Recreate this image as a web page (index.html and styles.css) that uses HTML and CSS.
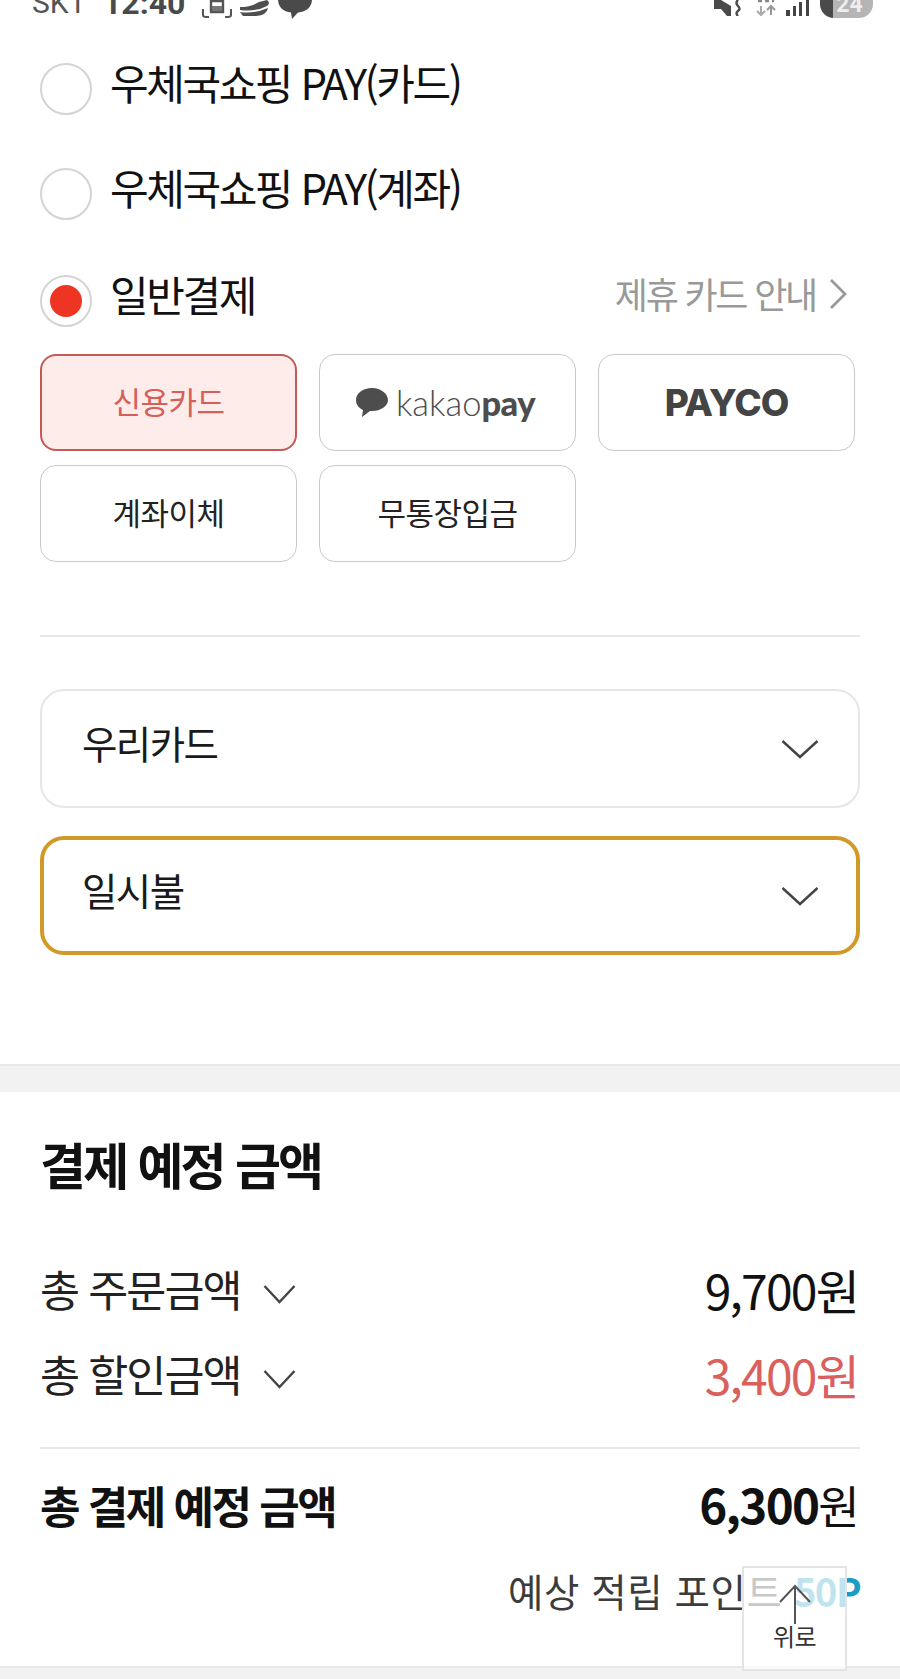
FILE: index.html
```html
<!DOCTYPE html>
<html lang="ko">
<head>
<meta charset="utf-8">
<title>결제</title>
<link rel="stylesheet" href="styles.css">
</head>
<body>
<div class="page">
  <div class="status">
    <div class="status-left">
      <span class="carrier">SKT</span>
      <span class="clock">12:40</span>
      <svg class="si si-rec" viewBox="0 0 30 18"><path d="M1 9v6q0 2 3 2h3M29 9v6q0 2-3 2h-3" fill="none" stroke="#555" stroke-width="2"/><path d="M9 1h12v11H9z" fill="none" stroke="#555" stroke-width="2.4"/><path d="M10 6h10v5H10z" fill="#777"/></svg>
      <svg class="si si-shoe" viewBox="0 0 30 16"><path d="M0 7 Q11 7 19 2 L27 0 Q31 3 27 6 Q16 12 0 10Z" fill="#4f4f4f"/><path d="M0 12 Q14 14 28 8 Q27 15 16 16 H3Z" fill="#4f4f4f"/></svg>
      <svg class="si si-chat" viewBox="0 0 34 19"><path d="M0 0H34Q33 11 20 12.500L14 19 13 12.500Q1 11 0 0Z" fill="#4a4a4a"/></svg>
    </div>
    <div class="status-right">
      <svg class="si si-mute" viewBox="0 0 28 16"><path d="M0 0H7L17 6V16H13L7 9H0Z" fill="#4a4a4a"/><path d="M24 0q-3 3 0 6t0 5 0 5" fill="none" stroke="#4a4a4a" stroke-width="2.400"/></svg>
      <svg class="si si-net" viewBox="0 0 20 16"><path d="M5 6v9M1 11l4 4 4-4" fill="none" stroke="#aaa" stroke-width="2"/><path d="M15 15V6M11 10l4-4 4 4" fill="none" stroke="#999" stroke-width="2"/><path d="M2 1h16" stroke="#888" stroke-width="2.500" stroke-dasharray="4 3"/></svg>
      <svg class="si si-bars" viewBox="0 0 25 16"><path d="M1 10h4v6H1zM8 6h3v10H8zM14 2h3v14h-3zM21 0h3v16h-3z" fill="#444"/></svg>
      <div class="battery"><span class="battery-num">24</span></div>
    </div>
  </div>

  <section class="pay">
    <div class="option option-first">
      <span class="radio"></span>
      <span class="option-label">우체국쇼핑 PAY(카드)</span>
    </div>
    <div class="option">
      <span class="radio"></span>
      <span class="option-label">우체국쇼핑 PAY(계좌)</span>
    </div>
    <div class="option option-split">
      <span class="radio radio-on"></span>
      <span class="option-label">일반결제</span>
      <span class="partner">제휴 카드 안내
        <svg class="partner-chev" viewBox="0 0 18 32"><path d="M2 2l14 14L2 30" fill="none" stroke="#999" stroke-width="2.800"/></svg>
      </span>
    </div>

    <div class="methods">
      <div class="method method-on">신용카드</div>
      <div class="method method-logo">
        <svg class="kakao-bubble" viewBox="0 0 32 29"><path d="M16 0C7 0 0 5 0 12c0 5 3 8 7 10l-1 7 8-6h2c9 0 16-5 16-11S25 0 16 0Z" fill="#4d4d4d"/></svg>
        <span class="kakao-text">kakao<b class="kakao-pay">pay</b></span>
      </div>
      <div class="method method-logo payco">PAYCO</div>
      <div class="method">계좌이체</div>
      <div class="method">무통장입금</div>
    </div>

    <hr class="rule rule-pay">

    <div class="select">
      <span class="select-text">우리카드</span>
      <svg class="select-chev" viewBox="0 0 38 20"><path d="M1.500 2L19 18 36.500 2" fill="none" stroke="#444" stroke-width="2.400"/></svg>
    </div>
    <div class="select select-focus">
      <span class="select-text">일시불</span>
      <svg class="select-chev" viewBox="0 0 38 20"><path d="M1.500 2L19 18 36.500 2" fill="none" stroke="#444" stroke-width="2.400"/></svg>
    </div>
  </section>

  <div class="band"></div>

  <section class="summary">
    <h2 class="summary-title">결제 예정 금액</h2>
    <div class="line line-first">
      <span class="line-label">총 주문금액
        <svg class="line-chev" viewBox="0 0 33 20"><path d="M1.500 2L16.500 18 31.500 2" fill="none" stroke="#444" stroke-width="2.400"/></svg>
      </span>
      <span class="amount">9,700원</span>
    </div>
    <div class="line line-second">
      <span class="line-label">총 할인금액
        <svg class="line-chev" viewBox="0 0 33 20"><path d="M1.500 2L16.500 18 31.500 2" fill="none" stroke="#444" stroke-width="2.400"/></svg>
      </span>
      <span class="amount amount-red">3,400원</span>
    </div>
    <hr class="rule rule-summary">
    <div class="total">
      <span class="total-label">총 결제 예정 금액</span>
      <span class="total-amount"><b class="total-num">6,300</b>원</span>
    </div>
    <div class="points">예상 적립 포인트 <b class="points-num">50P</b></div>
  </section>

  <div class="band-bottom"></div>

  <div class="to-top">
    <svg class="to-top-arrow" viewBox="0 0 32 40"><path d="M16 40V2M1 18L16 2 31 18" fill="none" stroke="#555" stroke-width="2"/></svg>
    <span class="to-top-text">위로</span>
  </div>
</div>
</body>
</html>
```

FILE: styles.css
```css
* { box-sizing: border-box; }
html, body { margin: 0; padding: 0; background: #fff; }
body { font-family: "Noto Sans CJK KR", "Noto Sans", sans-serif; color: #1a1a1a; }
.page { position: relative; width: 900px; height: 1679px; overflow: hidden; background: #fff; }

.status { height: 19px; padding: 0 27px 0 32px; display: flex; justify-content: space-between; align-items: flex-end; overflow: hidden; }
.status-left, .status-right { display: flex; align-items: flex-start; height: 19px; }
.carrier, .clock { font-family: "Roboto", sans-serif; font-size: 30px; line-height: 30px; color: #555; margin-top: -12px; }
.carrier { width: 71px; }
.clock { font-weight: 700; width: 99px; font-size: 32px; color: #4a4a4a; }
.si { display: block; flex: none; }
.si-rec { width: 30px; height: 18px; margin-right: 8px; }
.si-shoe { width: 30px; height: 16px; margin-right: 8px; }
.si-chat { width: 34px; height: 19px; }
.si-mute { width: 28px; height: 16px; margin-right: 14px; }
.si-net { width: 20px; height: 16px; margin-right: 9px; }
.si-bars { width: 25px; height: 16px; margin-right: 10px; }
.battery { width: 53px; height: 18px; border-radius: 0 0 14px 14px; background: linear-gradient(90deg, #4a4a4a 0 13px, #b5b5b5 13px); text-align: center; overflow: hidden; }
.battery-num { display: block; font-family: "Roboto", sans-serif; font-weight: 700; font-size: 23px; line-height: 23px; color: #eee; margin-top: -7px; padding-left: 6px; }

.pay { padding: 0 40px; }
.option { display: flex; align-items: center; height: 51px; margin-top: 54px; }
.option-first { margin-top: 44px; }
.option-split { margin-top: 56px; }
.radio { flex: none; width: 52px; height: 52px; border: 2px solid #d4d4d4; border-radius: 50%; margin-right: 18px; display: flex; align-items: center; justify-content: center; background: #fff; }
.radio-on::after { content: ""; width: 32px; height: 32px; border-radius: 50%; background: #ee3524; }
.option-label { font-size: 42px; line-height: 51px; letter-spacing: -2.430px; color: #111; margin-top: -14px; }
.partner { margin-left: auto; margin-right: 13px; display: flex; align-items: center; gap: 13px; font-size: 36px; line-height: 51px; letter-spacing: -2.200px; color: #999; margin-top: -14px; }
.partner-chev { width: 18px; height: 32px; }

.methods { display: grid; grid-template-columns: repeat(3, 257px); grid-auto-rows: 97px; column-gap: 22px; row-gap: 14px; margin-top: 28px; }
.method { display: flex; align-items: center; justify-content: center; border: 1.500px solid #c9c9c9; border-radius: 16px; font-size: 31px; letter-spacing: -.550px; color: #222; background: #fff; padding-bottom: 4px; }
.method-on { border: 2.500px solid #c45a55; background: #fdecea; color: #d4605a; }
.method-logo { padding: 0 4px 0 0; }
.kakao-bubble { width: 32px; height: 29px; margin-right: 8px; }
.kakao-text { font-family: "Lato", sans-serif; font-weight: 300; font-size: 34.500px; line-height: 40px; color: #4d4d4d; letter-spacing: 0; }
.kakao-pay { font-weight: 900; letter-spacing: -.500px; }
.payco { font-family: "Inter", sans-serif; font-weight: 800; font-size: 37px; letter-spacing: -1px; color: #444; padding: 0; }

.rule { border: 0; margin: 0; height: 2px; background: #e8e8e8; }
.rule-pay { margin-top: 73px; width: 820px; }

.select { display: flex; align-items: center; justify-content: space-between; height: 119px; margin-top: 52px; width: 820px; padding: 0 39px 14px 40px; border: 2px solid #e6e6e6; border-radius: 24px; background: #fff; }
.select-focus { margin-top: 28px; height: 119px; border: 4px solid #d09a28; padding: 0 37px 14px 38px; }
.select-text { font-size: 38.500px; line-height: 50px; letter-spacing: -1.600px; color: #1a1a1a; }
.select-chev { width: 38px; height: 20px; margin-top: 15px; }

.band { margin-top: 109px; height: 28px; background: #f2f2f2; border-top: 2px solid #e8e8e8; }

.summary { padding: 47px 40px 0 40px; }
.summary-title { margin: 0; font-size: 50px; font-weight: 700; line-height: 48px; letter-spacing: -2.850px; color: #111; }
.line { display: flex; justify-content: space-between; align-items: center; height: 40px; padding: 0 2px 8px 0; }
.line-first { margin-top: 86px; }
.line-second { margin-top: 45px; }
.line-label { display: flex; align-items: center; gap: 22px; font-size: 43.500px; line-height: 40px; letter-spacing: -1.950px; color: #222; }
.line-chev { width: 33px; height: 20px; margin-top: 10px; }
.amount { font-size: 48px; line-height: 40px; letter-spacing: -1.800px; color: #111; }
.amount-red { color: #d9605c; }
.rule-summary { margin-top: 49px; }
.total { display: flex; justify-content: space-between; align-items: center; height: 42px; margin-top: 36px; padding: 0 2px 3px 0; }
.total-label { font-size: 44px; font-weight: 700; line-height: 42px; letter-spacing: -2.500px; color: #111; }
.total-amount { font-size: 45px; line-height: 42px; letter-spacing: -1.700px; color: #111; }
.total-num { font-weight: 700; font-size: 47.500px; }
.points { margin-top: 45px; height: 36px; text-align: right; font-size: 38.500px; line-height: 36px; letter-spacing: .550px; color: #3c3c3c; }
.points-num { font-weight: 700; color: #1a9cc4; letter-spacing: -1.600px; }

.band-bottom { position: absolute; left: 0; right: 0; bottom: 0; height: 13px; background: #f2f2f2; border-top: 2px solid #e8e8e8; }

.to-top { position: absolute; left: 742px; top: 1566px; width: 105px; height: 105px; display: flex; flex-direction: column; align-items: center; padding-top: 16px; background: rgba(255, 255, 255, .72); border: 2px solid #e4e4e4; }
.to-top-arrow { width: 32px; height: 40px; }
.to-top-text { margin-top: -2px; font-size: 24px; line-height: 28px; letter-spacing: -.500px; color: #333; }
```
